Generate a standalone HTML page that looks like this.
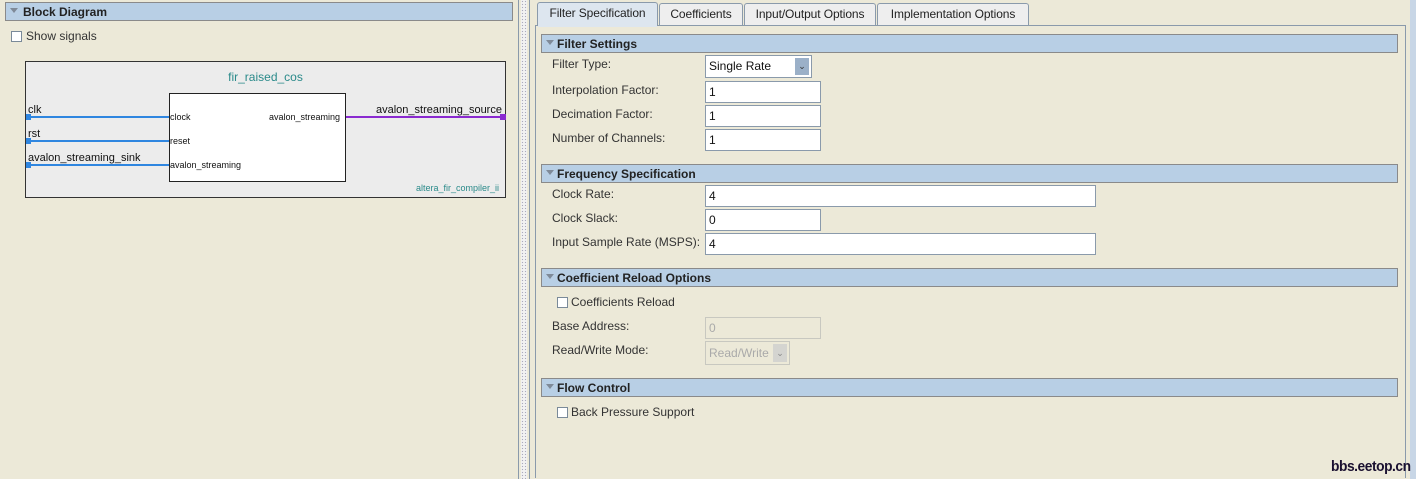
<!DOCTYPE html>
<html><head><meta charset="utf-8"><style>
*{margin:0;padding:0;box-sizing:border-box}
body{width:1416px;height:479px;background:#ece9d8;font-family:"Liberation Sans",Arial,sans-serif;font-size:12px;color:#333;position:relative;overflow:hidden}
.a{position:absolute}
.hdr{position:absolute;background:#b8cfe5;border:1px solid #8a8a8a;font-weight:bold;font-size:12px;color:#222;padding-left:15px;line-height:19px}
.hdr:before{content:"";position:absolute;left:4px;top:5px;border-left:4px solid transparent;border-right:4px solid transparent;border-top:5px solid #7f8a98}
.lbl{position:absolute;font-size:12px;color:#333}
.fld{position:absolute;background:#fff;border:1px solid #8a9aab;font-size:12px;padding-left:3px;line-height:20px;color:#111}
.cb{position:absolute;width:11px;height:11px;border:1px solid #7a8a99;background:#fff}
.tab{position:absolute;top:3px;height:22px;border:1px solid #8a9aab;border-bottom:none;background:#eeeeee;font-size:12px;color:#222;text-align:center;line-height:20px;border-radius:3px 3px 0 0;letter-spacing:-0.1px}
</style></head><body>
<div class="hdr" style="left:5px;top:2px;width:508px;height:19px;font-size:12px;line-height:19px;padding-left:17px">Block Diagram</div>
<div class="cb" style="left:11px;top:31px"></div>
<div class="lbl" style="left:26px;top:29px;color:#333">Show signals</div>
<div class="a" style="left:25px;top:61px;width:481px;height:137px;border:1px solid #333;background:#ececec"></div>
<div class="a" style="left:25px;top:70px;width:481px;text-align:center;color:#2a8a8a;font-size:12px">fir_raised_cos</div>
<div class="a" style="left:169px;top:93px;width:177px;height:89px;border:1px solid #222;background:#fff"></div>
<div class="a" style="left:27px;top:116px;width:142px;height:2px;background:#2f86e0"></div>
<div class="a" style="left:27px;top:140px;width:142px;height:2px;background:#2f86e0"></div>
<div class="a" style="left:27px;top:164px;width:142px;height:2px;background:#2f86e0"></div>
<div class="a" style="left:26px;top:114px;width:5px;height:6px;background:#2f86e0"></div>
<div class="a" style="left:26px;top:138px;width:5px;height:6px;background:#2f86e0"></div>
<div class="a" style="left:26px;top:162px;width:5px;height:6px;background:#2f86e0"></div>
<div class="a" style="left:346px;top:116px;width:158px;height:2px;background:#8a2ad0"></div>
<div class="a" style="left:500px;top:114px;width:6px;height:6px;background:#8a2ad0"></div>
<div class="a" style="left:28px;top:104px;font-size:11px;color:#111">clk</div>
<div class="a" style="left:28px;top:128px;font-size:11px;color:#111">rst</div>
<div class="a" style="left:28px;top:152px;font-size:11px;color:#111">avalon_streaming_sink</div>
<div class="a" style="left:376px;top:104px;font-size:11px;color:#111">avalon_streaming_source</div>
<div class="a" style="left:170px;top:112px;font-size:9px;color:#111">clock</div>
<div class="a" style="left:170px;top:136px;font-size:9px;color:#111">reset</div>
<div class="a" style="left:170px;top:160px;font-size:9px;color:#111">avalon_streaming</div>
<div class="a" style="left:269px;top:112px;font-size:9px;color:#111">avalon_streaming</div>
<div class="a" style="left:416px;top:183px;font-size:9px;color:#2a8a8a">altera_fir_compiler_ii</div>
<div class="a" style="left:518px;top:0;width:1px;height:479px;background:#8a9aab"></div>
<div class="a" style="left:521px;top:0;width:6px;height:479px;background-image:radial-gradient(#aab 0.7px,transparent 0.8px);background-size:3px 3px;background-color:#f2f2f2"></div>
<div class="a" style="left:529px;top:0;width:1px;height:479px;background:#8a9aab"></div>
<div class="tab" style="left:537px;width:121px;background:#dde6ef;height:24px;top:2px">Filter Specification</div>
<div class="tab" style="left:659px;width:84px">Coefficients</div>
<div class="tab" style="left:744px;width:132px">Input/Output Options</div>
<div class="tab" style="left:877px;width:152px">Implementation Options</div>
<div class="a" style="left:535px;top:25px;width:871px;height:453px;border:1px solid #8a9aab;border-bottom:none"></div>
<div class="a" style="left:538px;top:25px;width:119px;height:2px;background:#dde6ef"></div>
<div class="a" style="left:1410px;top:0;width:6px;height:479px;background:#c8d6e6"></div>
<div class="hdr" style="left:541px;top:34px;width:857px;height:19px">Filter Settings</div>
<div class="lbl" style="left:552px;top:57px">Filter Type:</div>
<div class="fld" style="left:705px;top:55px;width:107px;height:23px">Single Rate</div>
<div class="a" style="left:795px;top:58px;width:14px;height:17px;background:#9bb0c8;color:#333;font-size:9px;text-align:center;line-height:17px">&#8964;</div>
<div class="lbl" style="left:552px;top:83px">Interpolation Factor:</div>
<div class="fld" style="left:705px;top:81px;width:116px;height:22px">1</div>
<div class="lbl" style="left:552px;top:107px">Decimation Factor:</div>
<div class="fld" style="left:705px;top:105px;width:116px;height:22px">1</div>
<div class="lbl" style="left:552px;top:131px">Number of Channels:</div>
<div class="fld" style="left:705px;top:129px;width:116px;height:22px">1</div>
<div class="hdr" style="left:541px;top:164px;width:857px;height:19px">Frequency Specification</div>
<div class="lbl" style="left:552px;top:187px">Clock Rate:</div>
<div class="fld" style="left:705px;top:185px;width:391px;height:22px">4</div>
<div class="lbl" style="left:552px;top:211px">Clock Slack:</div>
<div class="fld" style="left:705px;top:209px;width:116px;height:22px">0</div>
<div class="lbl" style="left:552px;top:235px">Input Sample Rate (MSPS):</div>
<div class="fld" style="left:705px;top:233px;width:391px;height:22px">4</div>
<div class="hdr" style="left:541px;top:268px;width:857px;height:19px">Coefficient Reload Options</div>
<div class="cb" style="left:557px;top:297px"></div>
<div class="lbl" style="left:571px;top:295px">Coefficients Reload</div>
<div class="lbl" style="left:552px;top:319px">Base Address:</div>
<div class="fld" style="left:705px;top:317px;width:116px;height:22px;background:#ece9d8;border-color:#c8c8c0;color:#aaa">0</div>
<div class="lbl" style="left:552px;top:343px">Read/Write Mode:</div>
<div class="fld" style="left:705px;top:341px;width:85px;height:24px;background:#ece9d8;border-color:#c8c8c0;color:#aaa;line-height:22px">Read/Write</div>
<div class="a" style="left:773px;top:344px;width:14px;height:18px;background:#d4d4d0;color:#888;font-size:9px;text-align:center;line-height:18px">&#8964;</div>
<div class="hdr" style="left:541px;top:378px;width:857px;height:19px">Flow Control</div>
<div class="cb" style="left:557px;top:407px"></div>
<div class="lbl" style="left:571px;top:405px">Back Pressure Support</div>
<div class="a" style="left:1331px;top:458px;font-weight:bold;font-size:15px;color:#1a1030;letter-spacing:-0.5px;transform:scaleX(0.92);transform-origin:left top">bbs.eetop.cn</div>
</body></html>
